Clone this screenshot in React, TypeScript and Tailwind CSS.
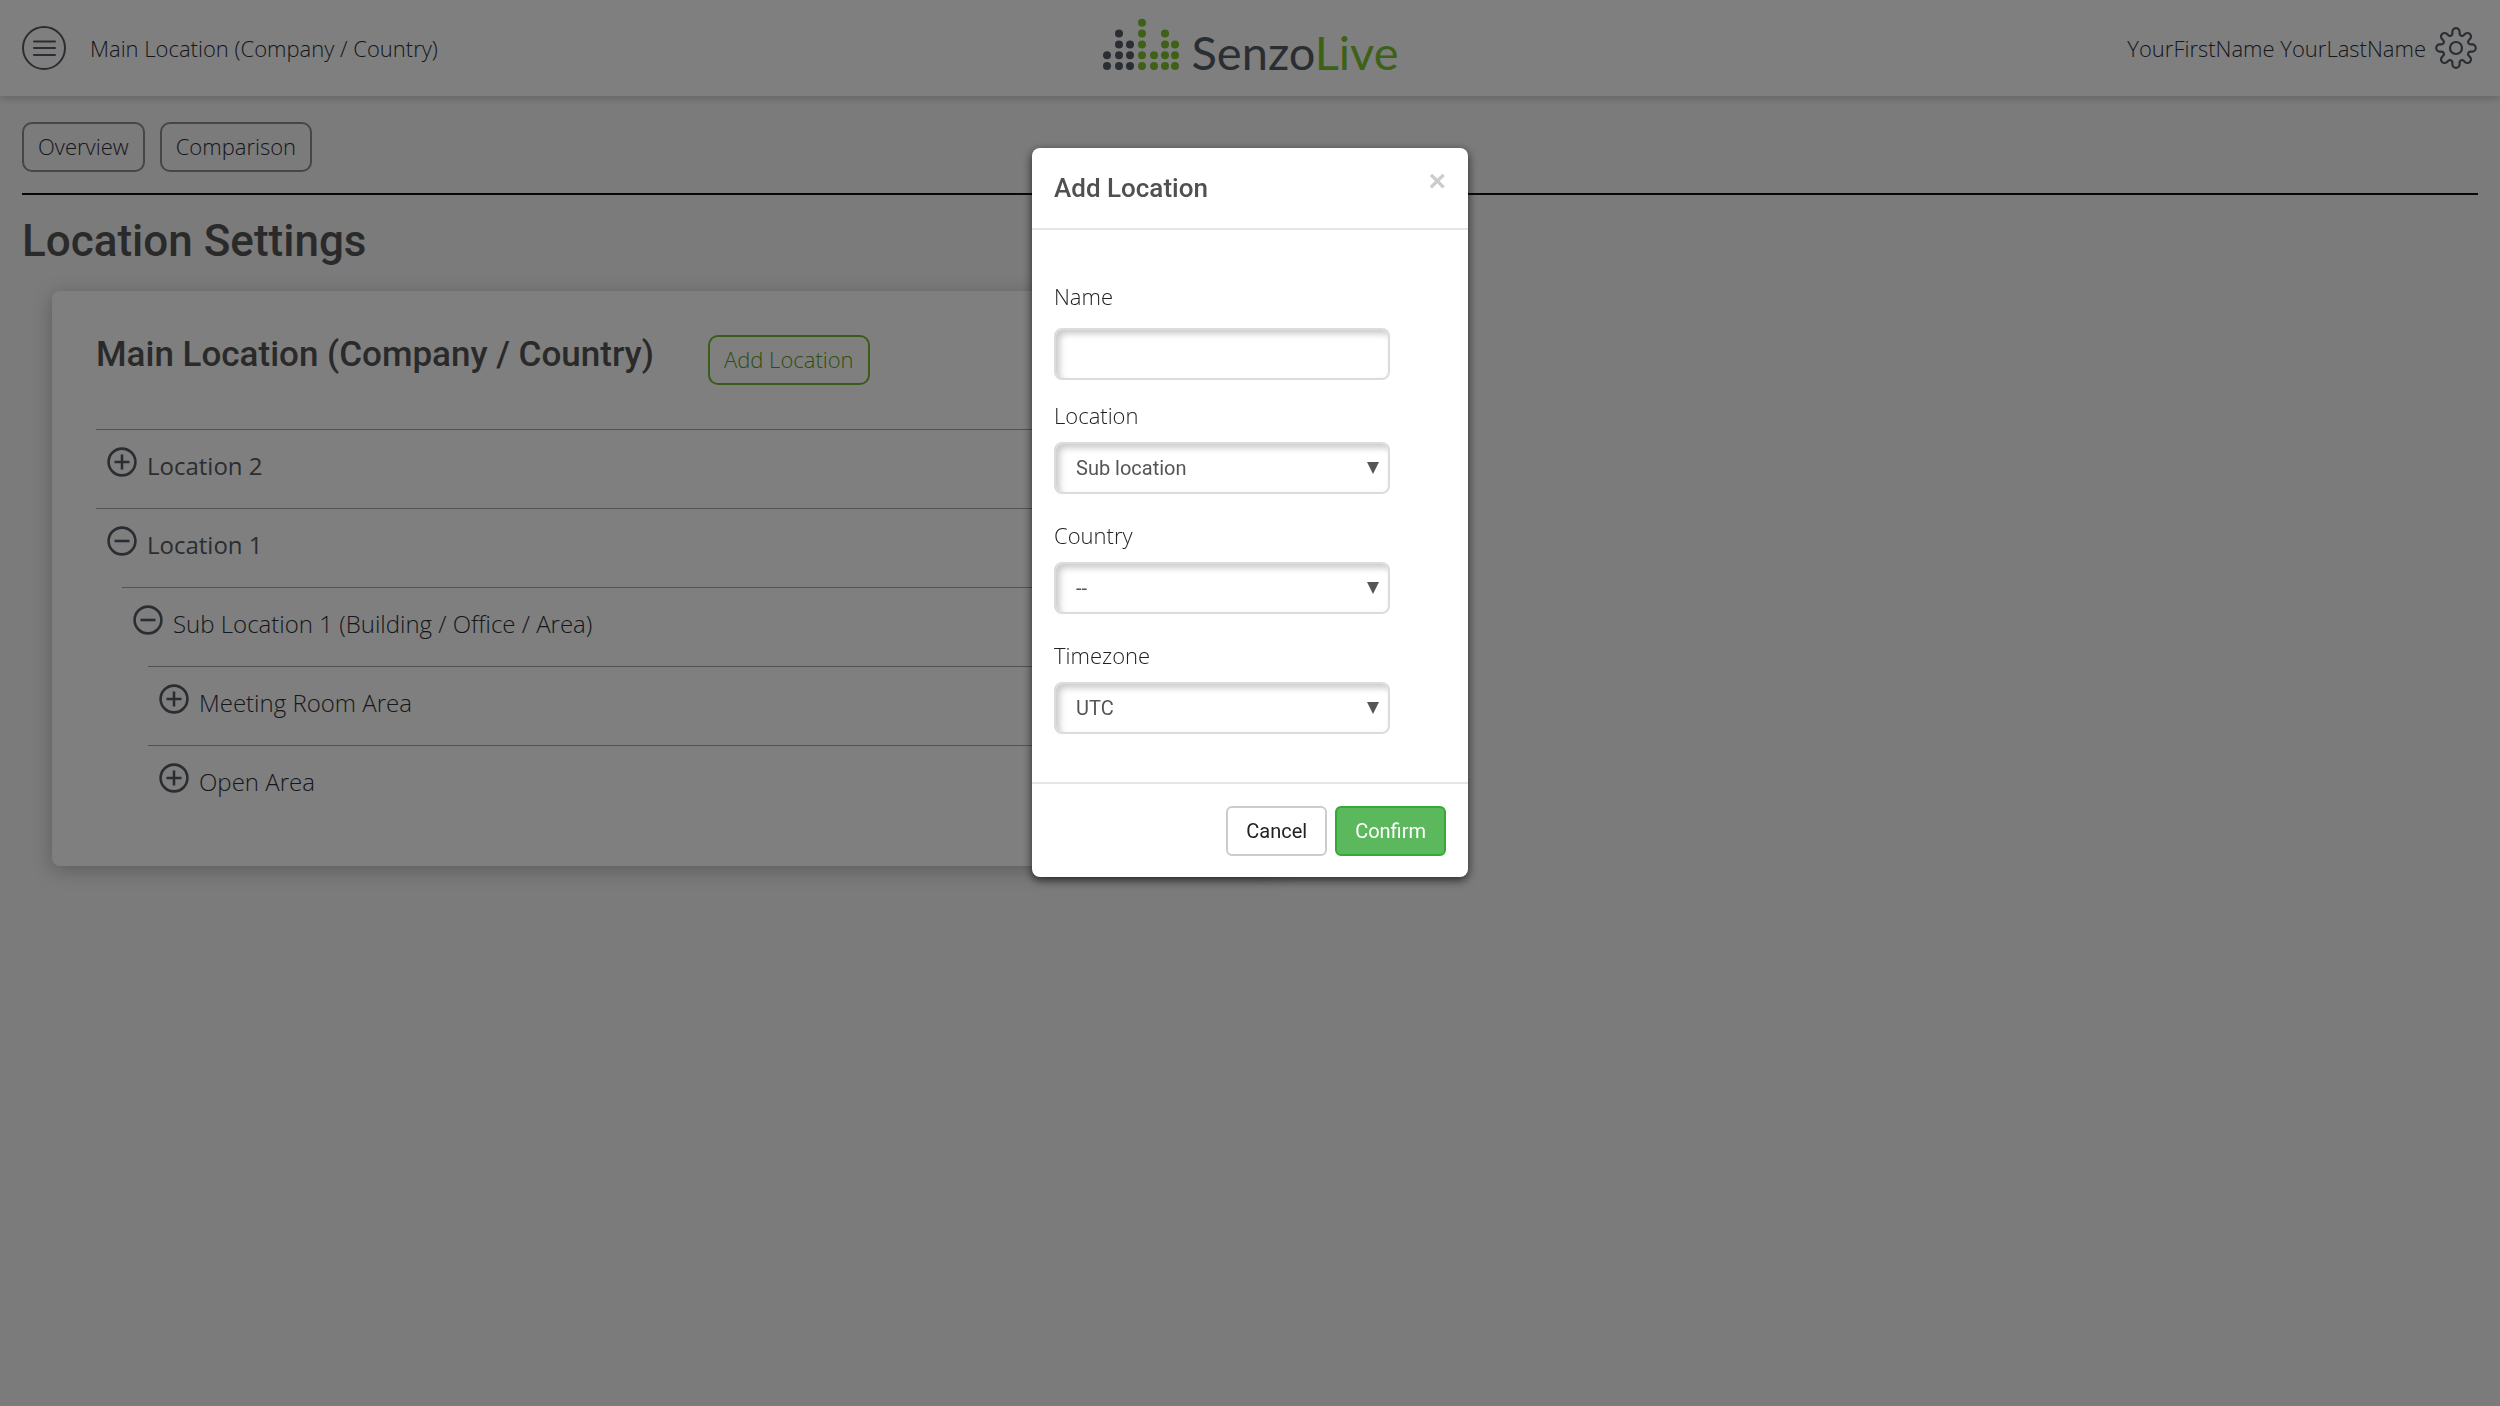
import { useId } from "react";
import type { ReactNode } from "react";

type TreeRow = {
	label: string;
	level: 0 | 1 | 2;
	open?: boolean;
	strong?: boolean;
};

const rows: TreeRow[] = [
	{ label: "Location 2", level: 0, strong: true },
	{ label: "Location 1", level: 0, open: true, strong: true },
	{ label: "Sub Location 1 (Building / Office / Area)", level: 1, open: true },
	{ label: "Meeting Room Area", level: 2 },
	{ label: "Open Area", level: 2 },
];

const indent = ["ml-0", "ml-[26px]", "ml-[52px]"];

const logoColumns = [
	{ x: 5, dots: 2, green: false },
	{ x: 17, dots: 4, green: false },
	{ x: 28, dots: 3, green: false },
	{ x: 40, dots: 5, green: true },
	{ x: 52, dots: 2, green: true },
	{ x: 63, dots: 4, green: true },
	{ x: 73, dots: 3, green: true },
];

// eight round teeth joined by round valleys
function gearPath() {
	const point = (deg: number, along: number, side: number) => {
		const a = (deg * Math.PI) / 180;
		const x = 22 + along * Math.cos(a) - side * Math.sin(a);
		const y = 22 + along * Math.sin(a) + side * Math.cos(a);
		return `${x.toFixed(2)} ${y.toFixed(2)}`;
	};
	let d = `M${point(0, 14.5, -3.6)}`;
	for (let i = 0; i < 8; i++) {
		const deg = i * 45;
		d += `L${point(deg, 16.2, -3.6)}A3.6 3.6 0 0 1 ${point(deg, 16.2, 3.6)}L${point(deg, 14.5, 3.6)}`;
		d += `A2.4 2.4 0 0 0 ${point(deg + 45, 14.5, -3.6)}`;
	}
	return `${d}Z`;
}

function MenuIcon() {
	return (
		<svg viewBox="0 0 44 44" className="size-11 text-[#545b64]" fill="none" stroke="currentColor" strokeWidth="2" strokeLinecap="round">
			<circle cx="22" cy="22" r="21" />
			<path d="M12 15.5h21M12 22h21M12 29h21" />
		</svg>
	);
}

function GearIcon() {
	return (
		<svg viewBox="0 0 44 44" className="size-11 text-[#545b64]" fill="none" stroke="currentColor" strokeWidth="2.2" strokeLinejoin="round">
			<path d={gearPath()} />
			<circle cx="22" cy="22" r="6" />
		</svg>
	);
}

function ToggleIcon({ open }: { open?: boolean }) {
	return (
		<svg viewBox="0 0 30 30" className="size-[30px] text-[#545b64]" fill="none" stroke="currentColor" strokeWidth="2.6">
			<circle cx="15" cy="15" r="13.4" />
			<path d={open ? "M7.5 15h15" : "M7.5 15h15M15 7.5v15"} />
		</svg>
	);
}

function Logo() {
	return (
		<a href="#" className="flex items-baseline gap-3">
			<svg viewBox="0 0 78 52" className="h-[52px] w-[78px]" aria-hidden="true">
				{logoColumns.map((col) =>
					Array.from({ length: col.dots }, (_, i) => (
						<circle key={`${col.x}-${i}`} cx={col.x} cy={48 - i * 10.8} r="4" fill={col.green ? "#7ac22e" : "#545b64"} />
					)),
				)}
			</svg>
			<span className="font-[Lato,sans-serif] text-[47px] leading-[52px] font-normal text-[#545b64]">
				Senzo<span className="text-[#7ac22e]">Live</span>
			</span>
		</a>
	);
}

function OutlineButton({ children, green }: { children: ReactNode; green?: boolean }) {
	return (
		<button
			type="button"
			className={`h-[50px] rounded-[10px] border-2 px-[14px] pb-0.5 text-[22px] leading-7 ${
				green ? "border-[#75b82e] text-[#5c9c1c]" : "border-[#8c8c8c] text-[#2b3036]"
			}`}
		>
			{children}
		</button>
	);
}

const control =
	"h-[52px] w-[336px] rounded-lg border-2 border-[#dcdcdc] bg-white px-5 font-[Roboto,sans-serif] text-xl font-normal text-[#555] shadow-[inset_4px_4px_6px_#ccc] outline-none";

function SelectField({ label, value }: { label: string; value: string }) {
	const id = useId();
	return (
		<div className="mb-[27px] flex flex-col items-start gap-[13px]">
			<label htmlFor={id} className="text-[22px] leading-7">
				{label}
			</label>
			<div className="relative">
				<select id={id} defaultValue={value} className={`${control} appearance-none`}>
					<option>{value}</option>
				</select>
				<svg viewBox="0 0 12 12" className="pointer-events-none absolute top-5 right-[11px] size-3" fill="#555">
					<path d="M0 0h12L6 12z" />
				</svg>
			</div>
		</div>
	);
}

function AddLocationModal() {
	return (
		<div className="fixed inset-0 flex items-start justify-center bg-black/50 pt-[148px]">
			<div
				role="dialog"
				aria-labelledby="modal-title"
				className="w-[436px] rounded-lg bg-white text-[#222] shadow-[0_3px_10px_rgba(0,0,0,0.7)]"
			>
				<div className="flex items-start justify-between border-b-2 border-[#e5e5e5] px-[22px] py-[23px]">
					<h2 id="modal-title" className="font-[Roboto,sans-serif] text-[26px] leading-[34px] font-medium text-[#505050]">
						Add Location
					</h2>
					<button type="button" aria-label="Close" className="font-['Liberation_Sans',sans-serif] text-[30px] leading-5 font-bold text-[#ccc]">
						×
					</button>
				</div>
				<form className="border-b-2 border-[#e5e5e5] px-[22px] pt-[52px] pb-[21px]">
					<div className="mb-[21px] flex flex-col items-start gap-[18px]">
						<label htmlFor="name" className="text-[22px] leading-7">
							Name
						</label>
						<input id="name" type="text" className={control} />
					</div>
					<SelectField label="Location" value="Sub location" />
					<SelectField label="Country" value="--" />
					<SelectField label="Timezone" value="UTC" />
				</form>
				<div className="flex justify-end gap-2 px-[22px] pt-[22px] pb-[21px] font-[Roboto,sans-serif] text-xl font-normal">
					<button type="button" className="h-[50px] rounded-md border-2 border-[#ccc] bg-white px-[18px] text-[#222]">
						Cancel
					</button>
					<button type="button" className="h-[50px] rounded-md border-2 border-[#35a935] bg-[#5cb85c] px-[18px] text-white">
						Confirm
					</button>
				</div>
			</div>
		</div>
	);
}

export default function App() {
	return (
		<div className="min-h-screen bg-[#f6f6f6] font-['Open_Sans',sans-serif] font-light text-[#2b3036]">
			<header className="grid h-24 grid-cols-3 items-center bg-white px-[22px] shadow-[0_2px_8px_rgba(0,0,0,0.2)]">
				<div className="flex items-center gap-6">
					<button type="button" aria-label="Menu">
						<MenuIcon />
					</button>
					<span className="text-[22px] leading-7">Main Location (Company / Country)</span>
				</div>
				<div className="flex justify-center">
					<Logo />
				</div>
				<div className="flex items-center justify-end gap-2">
					<span className="text-[22px] leading-7">YourFirstName YourLastName</span>
					<button type="button" aria-label="Settings">
						<GearIcon />
					</button>
				</div>
			</header>

			<main className="px-[22px] pt-[26px]">
				<nav className="flex gap-[15px] border-b-2 border-[#111] pb-[21px]">
					<OutlineButton>Overview</OutlineButton>
					<OutlineButton>Comparison</OutlineButton>
				</nav>
				<h1 className="mt-[22px] font-[Roboto,sans-serif] text-[44px] leading-[48px] font-medium text-[#555]">Location Settings</h1>

				<section className="mt-[26px] ml-[30px] w-1/2 rounded-lg bg-white px-11 pt-11 pb-[42px] shadow-[0_4px_20px_rgba(0,0,0,0.25)]">
					<div className="mb-11 flex items-start gap-[54px]">
						<h2 className="font-[Roboto,sans-serif] text-[35px] leading-10 font-medium text-[#555]">Main Location (Company / Country)</h2>
						<OutlineButton green>Add Location</OutlineButton>
					</div>
					<ul>
						{rows.map((row) => (
							<li key={row.label} className={`flex h-[79px] items-start gap-2.5 border-t border-[#a5a5a5] px-[11px] pt-[17px] ${indent[row.level]}`}>
								<button type="button" aria-label={row.open ? "Collapse" : "Expand"}>
									<ToggleIcon open={row.open} />
								</button>
								<span className={`pt-1 text-[24px] leading-[30px] ${row.strong ? "font-medium text-[#545b64]" : "font-light"}`}>{row.label}</span>
							</li>
						))}
					</ul>
				</section>
			</main>

			<AddLocationModal />
		</div>
	);
}
